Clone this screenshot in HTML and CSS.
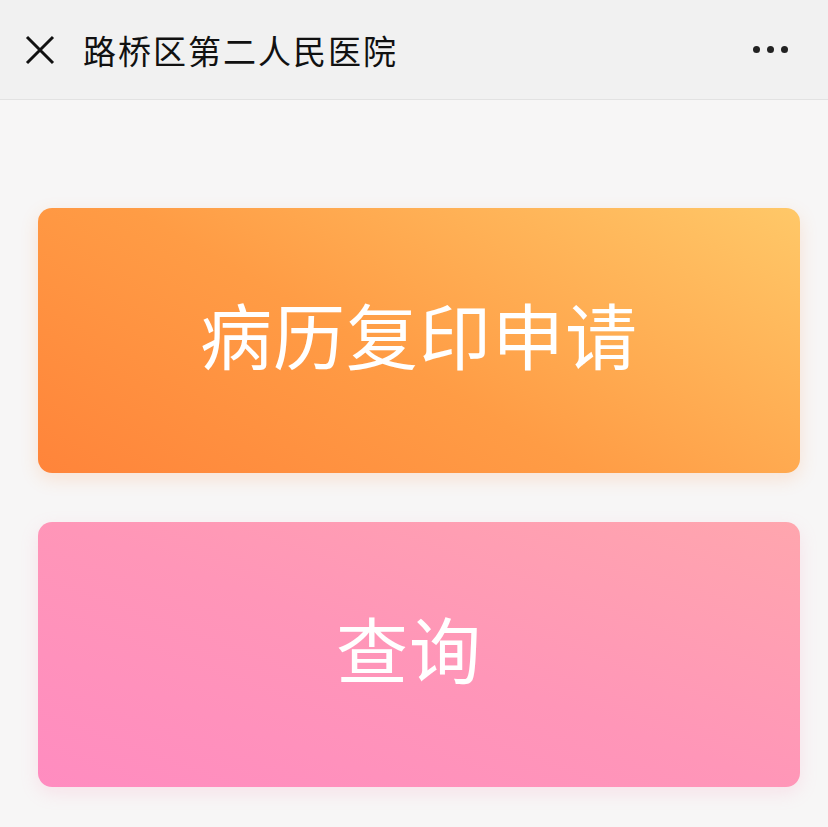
FILE: index.html
```html
<!DOCTYPE html>
<html lang="zh-CN">
<head>
    <meta charset="UTF-8">
    <meta name="viewport" content="width=device-width, initial-scale=1.0">
    <title>路桥区第二人民医院</title>
    <link rel="stylesheet" href="styles.css">
</head>
<body>
    <div class="header">
        <div class="close">
            <svg width="32" height="32" viewBox="0 0 32 32">
                <path d="M3 3 L29 29 M29 3 L3 29" stroke="#111" stroke-width="3" fill="none"/>
            </svg>
        </div>
        <div class="title">路桥区第二人民医院</div>
        <div class="more">
            <span></span><span></span><span></span>
        </div>
    </div>
    <div class="content">
        <div class="card card-orange">病历复印申请</div>
        <div class="card card-pink">查询</div>
    </div>
</body>
</html>
```

FILE: styles.css
```css
* {
    margin: 0;
    padding: 0;
    box-sizing: border-box;
    font-family: 'Noto Sans CJK SC', 'Noto Sans', sans-serif;
}

body {
    background: #f7f6f6;
    width: 828px;
    height: 827px;
    overflow: hidden;
}

.header {
    height: 100px;
    background: #f1f1f1;
    border-bottom: 1px solid #e2e2e2;
    display: flex;
    align-items: center;
    padding: 0 40px 0 24px;
}

.close {
    width: 32px;
    height: 32px;
    display: flex;
}

.title {
    margin-left: 27px;
    font-size: 33px;
    letter-spacing: 2px;
    color: #111;
    font-weight: 400;
    flex: 1;
}

.more {
    display: flex;
    gap: 7px;
}

.more span {
    width: 7px;
    height: 7px;
    border-radius: 50%;
    background: #222;
}

.content {
    padding: 108px 28px 0 38px;
    display: flex;
    flex-direction: column;
    gap: 49px;
}

.card {
    height: 265px;
    border-radius: 14px;
    display: flex;
    align-items: center;
    justify-content: center;
    color: #fff;
    font-size: 72px;
    letter-spacing: 1px;
    padding-bottom: 16px;
}

.card-orange {
    background: linear-gradient(30deg, #ff843a 0%, #ff9c45 45%, #ffc868 100%);
    box-shadow: 0 6px 18px rgba(255, 140, 60, 0.18);
}

.card-pink {
    padding-right: 20px;
    background: linear-gradient(20deg, #ff8cc0 0%, #ff96b8 50%, #ffa6ae 100%);
    box-shadow: 0 6px 18px rgba(255, 140, 180, 0.18);
}
```
